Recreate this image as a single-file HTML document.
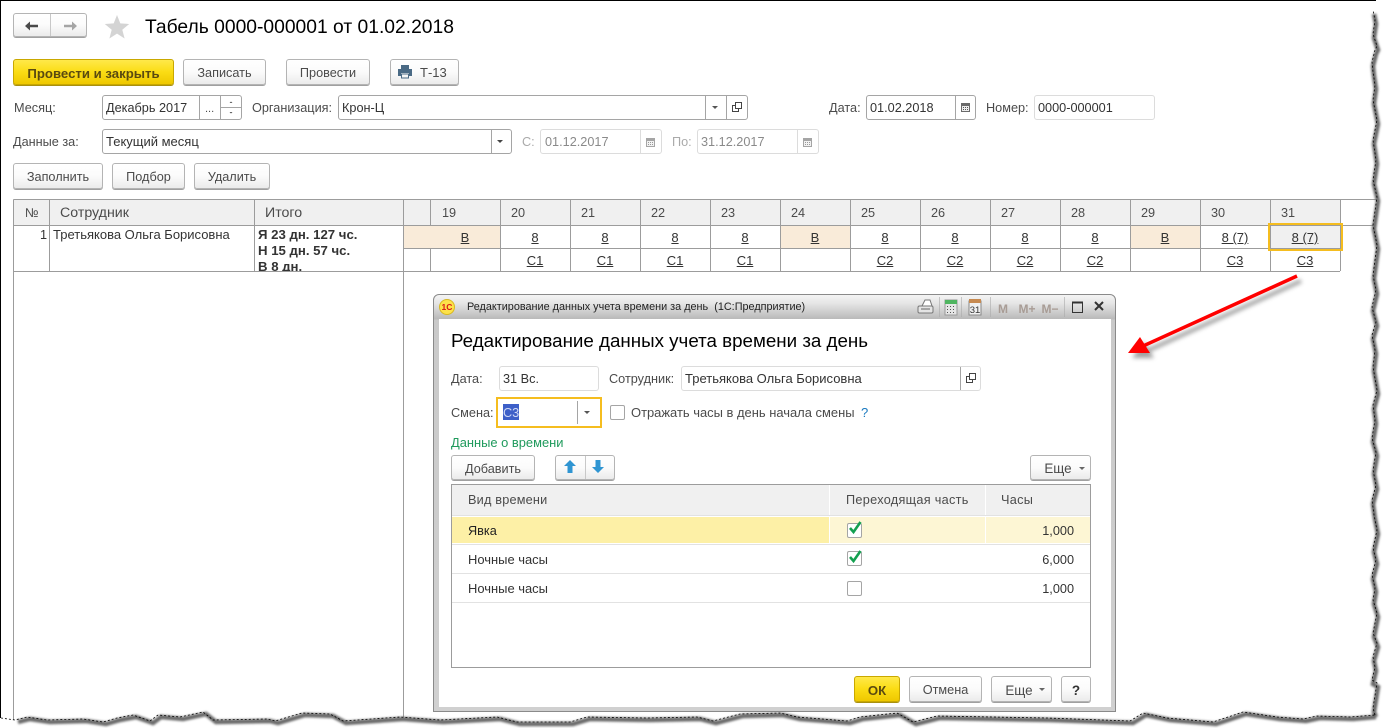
<!DOCTYPE html>
<html lang="ru"><head><meta charset="utf-8"><title>Табель</title>
<style>
html,body{margin:0;padding:0;background:#fff}
#p{position:relative;width:1385px;height:728px;overflow:hidden;background:#fff;font:12.7px "Liberation Sans",sans-serif;color:#4b4b4b}
#p div{position:absolute;box-sizing:border-box}
.t{white-space:nowrap;line-height:16px;height:16px;transform:translateY(1px)}
.v{color:#333}
.g{color:#aaa}
.b{border:1px solid #b4b4b4;border-radius:3px;background:linear-gradient(#fff 0%,#fbfbfb 50%,#ebebeb 100%);box-shadow:0 1px 0 #a0a0a0;text-align:center;white-space:nowrap;color:#4b4b4b;padding-top:1px}
.y{border:1px solid #c9a800;background:linear-gradient(#ffe94a 0%,#fbdc14 50%,#efc800 100%);font-weight:bold;font-size:13.2px;color:#5a4a10;box-shadow:0 1px 0 #a89010}
.f{border:1px solid #a5a5a5;border-radius:3px;background:#fff}
.l{border:1px solid #dcdcdc;border-radius:3px;background:#fff}
.d{width:1px;background:#a5a5a5;top:0;bottom:0}
.c{text-align:center;text-decoration:underline;white-space:nowrap;line-height:16px;height:16px;color:#333;width:70px;transform:translateY(1px);font-size:13px}
svg{position:absolute;overflow:visible}
</style></head><body><div id="p">

<!-- table grid -->
<svg style="left:0;top:0" width="1385" height="728" shape-rendering="crispEdges">
<rect x="13" y="199" width="1327" height="26" fill="#f0f0f0"/>
<rect x="403" y="225" width="97" height="23" fill="#f9ebd9"/>
<rect x="780" y="225" width="70" height="23" fill="#f9ebd9"/>
<rect x="1130" y="225" width="70" height="23" fill="#f9ebd9"/>
<rect x="1270" y="225" width="70" height="23" fill="#f0f0f0"/>
<g stroke="#9c9c9c" stroke-width="1">
<path d="M13.5 199.5H1385M13.5 225.5H1385M403.5 248.5H1340M13.5 271.5H1340"/>
<path d="M13.5 199.5V728M403.5 199.5V728M49.5 199.5V271M254.5 199.5V271"/>
<path d="M430.5 199.5V225M430.5 248V271M500.5 199.5V271M570.5 199.5V271M640.5 199.5V271M710.5 199.5V271M780.5 199.5V271M850.5 199.5V271M920.5 199.5V271M990.5 199.5V271M1060.5 199.5V271M1130.5 199.5V271M1200.5 199.5V271M1270.5 199.5V271M1340.5 199.5V271"/>
</g>
<rect x="1269" y="224" width="73" height="26" fill="none" stroke="#f5bd1f" stroke-width="2"/>
</svg>

<!-- nav -->
<div class="b" style="left:13px;top:13px;width:74px;height:24px"><div class="d" style="left:36px;background:#c8c8c8"></div></div>
<svg style="left:24px;top:19px" width="56" height="14"><path d="M1 7l5-4.500v3.300h8v2.400H6v3.300z" fill="#4a4a4a"/><path d="M53 7l-5-4.500v3.300h-8v2.400h8v3.300z" fill="#a5a5a5"/></svg>
<svg style="left:104px;top:14px" width="26" height="26"><path d="M13 1l3.300 8.400 8.900.6-6.900 5.700 2.300 8.800L13 19.600 5.400 24.500l2.300-8.800L.8 10l8.900-.6z" fill="#d4d4d4"/></svg>
<div class="t" style="left:145px;top:15px;height:24px;line-height:24px;font-size:19.27px;color:#000">Табель 0000-000001 от 01.02.2018</div>

<!-- top buttons -->
<div class="b y" style="left:13px;top:59px;width:161px;height:26px;line-height:25px">Провести и закрыть</div>
<div class="b" style="left:183px;top:59px;width:83px;height:26px;line-height:25px">Записать</div>
<div class="b" style="left:286px;top:59px;width:84px;height:26px;line-height:25px">Провести</div>
<div class="b" style="left:390px;top:59px;width:69px;height:26px;line-height:25px;padding-left:29px;padding-top:0;text-align:left;font-size:13px">Т-13</div>
<svg style="left:397px;top:65px" width="16" height="14"><path d="M4 0h8v4H4zM1 4h14v7h-3V8H4v3H1z" fill="#4a6a85"/><path d="M4.500 9h7v4h-7z" fill="none" stroke="#4a6a85"/></svg>

<!-- row 1 -->
<div class="t" style="left:14px;top:99px">Месяц:</div>
<div class="f" style="left:102px;top:95px;width:140px;height:25px"><div class="d" style="left:96px"></div><div class="d" style="left:117px"></div><div style="left:118px;right:0;top:11px;height:1px;background:#a5a5a5"></div></div>
<div class="t v" style="left:106px;top:99px">Декабрь 2017</div>
<div class="t" style="left:205px;top:100px;font-size:11px">...</div>
<svg style="left:226px;top:99px" width="10" height="18"><path d="M3.500 4h3L5 2.500zM3.500 13h3L5 14.500z" fill="#555"/></svg>
<div class="t" style="left:252px;top:99px">Организация:</div>
<div class="f" style="left:338px;top:95px;width:410px;height:25px"><div class="d" style="left:366px"></div><div class="d" style="left:387px"></div></div>
<div class="t v" style="left:342px;top:99px">Крон-Ц</div>
<svg style="left:712px;top:106px" width="6" height="4"><path d="M0 0h6L3 3z" fill="#555"/></svg>
<svg style="left:732px;top:102px" width="11" height="11"><path d="M3.500 .5h6v6h-6zM3.500 3.500H.5v6h6V6.500" fill="none" stroke="#444"/></svg>
<div class="t" style="left:829px;top:99px">Дата:</div>
<div class="f" style="left:866px;top:95px;width:110px;height:25px"><div class="d" style="left:88px"></div></div>
<div class="t v" style="left:870px;top:99px">01.02.2018</div>
<svg style="left:960px;top:101px" width="11" height="12"><path d="M1 2h9v9H1z" fill="#6a6a6a"/><path d="M2 5h7v5H2z" fill="#eee"/><path d="M3 6h1v1H3zM5 6h1v1H5zM7 6h1v1H7zM3 8h1v1H3zM5 8h1v1H5zM7 8h1v1H7z" fill="#555"/></svg>
<div class="t" style="left:986px;top:99px">Номер:</div>
<div class="l" style="left:1034px;top:95px;width:121px;height:25px"></div>
<div class="t v" style="left:1038px;top:99px">0000-000001</div>

<!-- row 2 -->
<div class="t" style="left:13px;top:133px">Данные за:</div>
<div class="f" style="left:102px;top:129px;width:410px;height:25px"><div class="d" style="left:388px"></div></div>
<div class="t v" style="left:106px;top:133px;font-size:13px">Текущий месяц</div>
<svg style="left:497px;top:140px" width="6" height="4"><path d="M0 0h6L3 3z" fill="#444"/></svg>
<div class="t g" style="left:522px;top:133px">С:</div>
<div class="l" style="left:540px;top:129px;width:122px;height:25px"><div class="d" style="left:99px;background:#dcdcdc"></div></div>
<div class="t" style="left:545px;top:133px;color:#8a8a8a">01.12.2017</div>
<svg style="left:645px;top:136px" width="11" height="12"><path d="M1 2h9v9H1z" fill="#a5a5a5"/><path d="M2 5h7v5H2z" fill="#f2f2f2"/><path d="M3 6h1v1H3zM5 6h1v1H5zM7 6h1v1H7zM3 8h1v1H3zM5 8h1v1H5zM7 8h1v1H7z" fill="#999"/></svg>
<div class="t g" style="left:672px;top:133px">По:</div>
<div class="l" style="left:697px;top:129px;width:122px;height:25px"><div class="d" style="left:99px;background:#dcdcdc"></div></div>
<div class="t" style="left:701px;top:133px;color:#8a8a8a">31.12.2017</div>
<svg style="left:802px;top:136px" width="11" height="12"><path d="M1 2h9v9H1z" fill="#a5a5a5"/><path d="M2 5h7v5H2z" fill="#f2f2f2"/><path d="M3 6h1v1H3zM5 6h1v1H5zM7 6h1v1H7zM3 8h1v1H3zM5 8h1v1H5zM7 8h1v1H7z" fill="#999"/></svg>

<!-- row 3 -->
<div class="b" style="left:13px;top:163px;width:90px;height:26px;line-height:25px">Заполнить</div>
<div class="b" style="left:112px;top:163px;width:73px;height:26px;line-height:25px">Подбор</div>
<div class="b" style="left:194px;top:163px;width:76px;height:26px;line-height:25px">Удалить</div>

<!-- table header -->
<div class="t" style="left:25px;top:204px">№</div>
<div class="t" style="left:60px;top:204px;font-size:14.2px">Сотрудник</div>
<div class="t" style="left:265px;top:204px;font-size:14.2px">Итого</div>
<div class="t" style="left:442px;top:204px">19</div><div class="t" style="left:511px;top:204px">20</div><div class="t" style="left:581px;top:204px">21</div><div class="t" style="left:651px;top:204px">22</div><div class="t" style="left:721px;top:204px">23</div><div class="t" style="left:791px;top:204px">24</div><div class="t" style="left:861px;top:204px">25</div><div class="t" style="left:931px;top:204px">26</div><div class="t" style="left:1001px;top:204px">27</div><div class="t" style="left:1071px;top:204px">28</div><div class="t" style="left:1141px;top:204px">29</div><div class="t" style="left:1211px;top:204px">30</div><div class="t" style="left:1281px;top:204px">31</div>

<!-- table row -->
<div class="t v" style="left:40px;top:226px">1</div>
<div class="t v" style="left:53px;top:226px;font-size:13px">Третьякова Ольга Борисовна</div>
<div style="left:258px;top:227px;width:140px;height:44px;overflow:hidden;font-weight:bold;font-size:13.2px;line-height:16px;color:#333;white-space:nowrap">Я 23 дн. 127 чс.<br>Н 15 дн. 57 чс.<br>В 8 дн.</div>
<div class="c" style="left:430px;top:229px">В</div><div class="c" style="left:500px;top:229px">8</div><div class="c" style="left:570px;top:229px">8</div><div class="c" style="left:640px;top:229px">8</div><div class="c" style="left:710px;top:229px">8</div><div class="c" style="left:780px;top:229px">В</div><div class="c" style="left:850px;top:229px">8</div><div class="c" style="left:920px;top:229px">8</div><div class="c" style="left:990px;top:229px">8</div><div class="c" style="left:1060px;top:229px">8</div><div class="c" style="left:1130px;top:229px">В</div><div class="c" style="left:1200px;top:229px">8 (7)</div><div class="c" style="left:1270px;top:229px">8 (7)</div>
<div class="c" style="left:500px;top:252px">С1</div><div class="c" style="left:570px;top:252px">С1</div><div class="c" style="left:640px;top:252px">С1</div><div class="c" style="left:710px;top:252px">С1</div><div class="c" style="left:850px;top:252px">С2</div><div class="c" style="left:920px;top:252px">С2</div><div class="c" style="left:990px;top:252px">С2</div><div class="c" style="left:1060px;top:252px">С2</div><div class="c" style="left:1200px;top:252px">С3</div><div class="c" style="left:1270px;top:252px">С3</div>

<!-- dialog -->
<div style="left:433px;top:294px;width:683px;height:418px;border:1px solid #8a8a8a;border-radius:6px 6px 0 0;background:linear-gradient(#f4f4f4 0,#e6e6e6 8px,#b9b9b9 24px,#c9c9c9 25px,#d0d0d0 100%)"></div>
<div style="left:439px;top:319px;width:672px;height:388px;background:#fff"></div>
<svg style="left:439px;top:299px" width="17" height="17"><circle cx="8" cy="8" r="7.500" fill="#fde24a" stroke="#d8b820"/><text x="2.500" y="11" font-family="Liberation Sans" font-size="8.500" font-weight="bold" fill="#d81818">1С</text></svg>
<div class="t" style="left:467px;top:298px;font-size:10.85px;color:#222">Редактирование данных учета времени за день&nbsp; (1С:Предприятие)</div>

<svg style="left:900px;top:295px" width="210" height="26">
<path d="M22 11l3-6h5l2 6z" fill="#fff" stroke="#777"/><rect x="18" y="11" rx="1.500" width="15" height="7" fill="#e4e4e4" stroke="#777"/><path d="M21 14h9" stroke="#666"/>
<path d="M39.500 2v20M61.500 2v20M90.500 2v20M164.500 2v20" stroke="#aaa" stroke-opacity=".6"/>
<rect x="45" y="5" width="12" height="15" fill="#e6e6e6" stroke="#999"/><rect x="45" y="5" width="12" height="4" fill="#4fb560"/><path d="M47 11h1v1h-1zM50 11h1v1h-1zM53 11h1v1h-1zM47 14h1v1h-1zM50 14h1v1h-1zM53 14h1v1h-1zM47 17h1v1h-1zM50 17h1v1h-1zM53 17h1v1h-1z" fill="#555"/>
<rect x="69" y="6" width="12" height="14" fill="#f0f0f0" stroke="#888"/><rect x="69" y="4" width="12" height="4" fill="#c78a50"/>
<text x="75" y="18" text-anchor="middle" font-family="Liberation Sans" font-size="9.500" fill="#333">31</text>
<text x="103" y="18" text-anchor="middle" font-family="Liberation Sans" font-size="12" font-weight="bold" fill="#a89c95">M</text>
<text x="127" y="18" text-anchor="middle" font-family="Liberation Sans" font-size="12" font-weight="bold" fill="#a89c95">M+</text>
<text x="150" y="18" text-anchor="middle" font-family="Liberation Sans" font-size="12" font-weight="bold" fill="#a89c95">M−</text>
<path d="M172.500 7.500h10v10h-10z" fill="none" stroke="#333" stroke-width="1"/><path d="M172 7.500h11" stroke="#333" stroke-width="2"/>
<path d="M195 7l8 8M203 7l-8 8" stroke="#333" stroke-width="2"/>
</svg>

<div class="t" style="left:451px;top:328px;height:24px;line-height:24px;font-size:18.76px;color:#000">Редактирование данных учета времени за день</div>

<div class="t" style="left:451px;top:370px">Дата:</div>
<div class="l" style="left:499px;top:366px;width:100px;height:25px"></div>
<div class="t v" style="left:503px;top:370px">31 Вс.</div>
<div class="t" style="left:609px;top:370px">Сотрудник:</div>
<div class="l" style="left:681px;top:366px;width:300px;height:25px"><div class="d" style="left:278px;background:#a5a5a5"></div></div>
<div class="t v" style="left:685px;top:370px;font-size:13px">Третьякова Ольга Борисовна</div>
<svg style="left:966px;top:373px" width="11" height="11"><path d="M3.500 .5h6v6h-6zM3.500 3.500H.5v6h6V6.500" fill="none" stroke="#444"/></svg>

<div class="t" style="left:451px;top:404px">Смена:</div>
<div style="left:496px;top:397px;width:106px;height:31px;border:2px solid #f5bd1f;background:#fff"></div>
<div style="left:503px;top:404px;width:16px;height:16px;background:#3d5fc8"></div>
<div class="t" style="left:503px;top:404px;color:#cfd8f5">С3</div>
<div style="left:577px;top:401px;width:1px;height:23px;background:#a5a5a5"></div>
<svg style="left:584px;top:411px" width="6" height="4"><path d="M0 0h6L3 3z" fill="#555"/></svg>
<div style="left:610px;top:405px;width:15px;height:15px;border:1px solid #a5a5a5;border-radius:2px;background:#fff"></div>
<div class="t" style="left:631px;top:404px;font-size:12.95px">Отражать часы в день начала смены</div>
<div class="t" style="left:861px;top:404px;color:#1a7ac0;font-size:13px">?</div>

<div class="t" style="left:451px;top:434px;color:#1f9a5c;font-size:12.9px">Данные о времени</div>
<div class="b" style="left:451px;top:455px;width:84px;height:25px;line-height:24px">Добавить</div>
<div class="b" style="left:555px;top:455px;width:60px;height:25px"><div class="d" style="left:29px;background:#c8c8c8"></div></div>
<svg style="left:563px;top:459px" width="46" height="16"><path d="M7 1l6 6H9.500v7h-5V7H1z" fill="#2f95d2"/><path d="M35 14l6-6h-3.500V1h-5v7H29z" fill="#2f95d2"/></svg>
<div class="b" style="left:1030px;top:455px;width:61px;height:25px;line-height:24px;padding-right:5px;font-size:13.4px">Еще</div>
<svg style="left:1079px;top:467px" width="6" height="4"><path d="M0 0h6L3 3z" fill="#666"/></svg>

<!-- dialog table -->
<svg style="left:0;top:0" width="1385" height="728" shape-rendering="crispEdges">
<rect x="452" y="485" width="638" height="30" fill="#f0f0f0"/>
<rect x="452" y="517" width="377" height="26" fill="#fdf0a6"/>
<rect x="830" y="517" width="260" height="26" fill="#fdf6d4"/>
<path d="M452 515.500H1090M452 544.500H1090M452 573.500H1090M452 602.500H1090" stroke="#e2e2e2"/>
<path d="M829.500 485V515M985.500 485V515M829.500 517V543M985.500 517V543" stroke="#fff"/>
<rect x="451.500" y="484.500" width="639" height="183" fill="none" stroke="#9c9c9c"/>
</svg>
<div class="t" style="left:468px;top:491px;letter-spacing:.2px">Вид времени</div>
<div class="t" style="left:846px;top:491px;letter-spacing:.3px">Переходящая часть</div>
<div class="t" style="left:1001px;top:491px;letter-spacing:.3px">Часы</div>
<div class="t" style="left:468px;top:522px;color:#222">Явка</div>
<div class="t v" style="left:468px;top:551px;font-size:12.95px">Ночные часы</div>
<div class="t v" style="left:468px;top:580px;font-size:12.95px">Ночные часы</div>
<div class="t v" style="left:1024px;top:522px;width:50px;text-align:right">1,000</div>
<div class="t v" style="left:1024px;top:551px;width:50px;text-align:right">6,000</div>
<div class="t v" style="left:1024px;top:580px;width:50px;text-align:right">1,000</div>
<div style="left:847px;top:523px;width:15px;height:15px;border:1px solid #a5a5a5;border-radius:2px;background:#fff"></div>
<div style="left:847px;top:551px;width:15px;height:15px;border:1px solid #a5a5a5;border-radius:2px;background:#fff"></div>
<div style="left:847px;top:581px;width:15px;height:15px;border:1px solid #a5a5a5;border-radius:2px;background:#fff"></div>
<svg style="left:848px;top:520px" width="16" height="14"><path d="M2 8l3.500 4 7-10" fill="none" stroke="#14a050" stroke-width="2.600"/></svg>
<svg style="left:848px;top:549px" width="16" height="14"><path d="M2 8l3.500 4 7-10" fill="none" stroke="#14a050" stroke-width="2.600"/></svg>

<div class="b y" style="left:854px;top:676px;width:46px;height:26px;line-height:25px">ОК</div>
<div class="b" style="left:909px;top:676px;width:73px;height:26px;line-height:25px">Отмена</div>
<div class="b" style="left:991px;top:676px;width:61px;height:26px;line-height:25px;padding-right:5px;font-size:13.4px">Еще</div>
<svg style="left:1039px;top:688px" width="6" height="4"><path d="M0 0h6L3 3z" fill="#666"/></svg>
<div class="b" style="left:1061px;top:676px;width:30px;height:26px;line-height:25px;font-weight:bold;font-size:13.5px;color:#333">?</div>

<!-- red arrow -->
<svg style="left:0;top:0" width="1385" height="728">
<defs><filter id="bl" x="-20%" y="-20%" width="140%" height="140%"><feGaussianBlur stdDeviation="2"/></filter><filter id="bs" x="-5%" y="-5%" width="110%" height="110%"><feGaussianBlur stdDeviation="1.100"/></filter></defs>
<g filter="url(#bl)" opacity=".55" transform="translate(4 5)"><path d="M1297 276L1145 345" stroke="#555" stroke-width="4"/><path d="M1128 353l12-16 10 16z" fill="#555"/></g>
<path d="M1297 276L1143 346" stroke="#f00" stroke-width="3.500"/>
<path d="M1128 353l12-16 10 16z" fill="#f00"/>

<!-- torn edge -->
<path fill="#fff" d="M1 718L15 720 27 717 47 720 83 719 103 722 117 718 133 715 150 721 158 715 180 717 203 712 213 720 267 719 275 721 302 713 330 714 343 721 400 717 440 720 497 717 517 722 570 722 587 717 647 718 697 717 713 721 740 714 780 713 797 717 847 721 860 717 897 713 913 722 937 716 1047 718 1130 721 1143 713 1167 718 1213 722 1243 712 1277 717 1303 719 1317 716 1350 717 1375 715 V728 H0Z"/>
<path fill="#fff" d="M1375 715L1373 708 1377 683 1372 680 1375 667 1373 657 1377 643 1373 633 1375 623 1377 613 1373 600 1375 588 1372 575 1376 560 1373 548 1377 530 1374 515 1372 500 1376 485 1373 470 1376 452 1372 438 1375 420 1373 405 1377 390 1373 367 1375 350 1372 335 1376 322 1372 307 1376 290 1373 275 1375 260 1377 245 1373 225 1377 197 1373 180 1376 160 1373 140 1377 120 1373 100 1375 85 1373 72 1372 62 1375 50 1377 46 1373 34 1375 20 1373 10 1376 2 V0 H1385 V728 H1375Z"/>
<g fill="none" stroke="#6a6a6a" stroke-width="4.500" filter="url(#bs)" transform="translate(3 4)">
<path d="M15 718L27 715 47 718 83 717 103 720 117 716 133 713 150 719 158 713 180 715 203 710 213 718 267 717 275 719 302 711 330 712 343 719 400 715 440 718 497 715 517 720 570 720 587 715 647 716 697 715 713 719 740 712 780 711 797 715 847 719 860 715 897 711 913 720 937 714 1047 716 1130 719 1143 711 1167 716 1213 720 1243 710 1277 715 1303 717 1317 714 1350 715 1373 713"/>
<path d="M1373 713L1371 708 1375 683 1370 680 1373 667 1371 657 1375 643 1371 633 1373 623 1375 613 1371 600 1373 588 1370 575 1374 560 1371 548 1375 530 1372 515 1370 500 1374 485 1371 470 1374 452 1370 438 1373 420 1371 405 1375 390 1371 367 1373 350 1370 335 1374 322 1370 307 1374 290 1371 275 1373 260 1375 245 1371 225 1375 197 1371 180 1374 160 1371 140 1375 120 1371 100 1373 85 1371 72 1370 62 1373 50 1375 46 1371 34 1373 20 1371 10"/>
</g>
<g fill="none" stroke="#000" stroke-width=".8" stroke-dasharray="2 2">
<path d="M1 718L15 720 27 717 47 720 83 719 103 722 117 718 133 715 150 721 158 715 180 717 203 712 213 720 267 719 275 721 302 713 330 714 343 721 400 717 440 720 497 717 517 722 570 722 587 717 647 718 697 717 713 721 740 714 780 713 797 717 847 721 860 717 897 713 913 722 937 716 1047 718 1130 721 1143 713 1167 718 1213 722 1243 712 1277 717 1303 719 1317 716 1350 717 1375 715"/>
<path d="M1375 715L1373 708 1377 683 1372 680 1375 667 1373 657 1377 643 1373 633 1375 623 1377 613 1373 600 1375 588 1372 575 1376 560 1373 548 1377 530 1374 515 1372 500 1376 485 1373 470 1376 452 1372 438 1375 420 1373 405 1377 390 1373 367 1375 350 1372 335 1376 322 1372 307 1376 290 1373 275 1375 260 1377 245 1373 225 1377 197 1373 180 1376 160 1373 140 1377 120 1373 100 1375 85 1373 72 1372 62 1375 50 1377 46 1373 34 1375 20 1373 10"/>
</g>
<rect x="0" y="0" width="1376" height="1" fill="#000"/>
<rect x="0" y="0" width="1" height="718" fill="#000"/>
</svg>
</div></body></html>
